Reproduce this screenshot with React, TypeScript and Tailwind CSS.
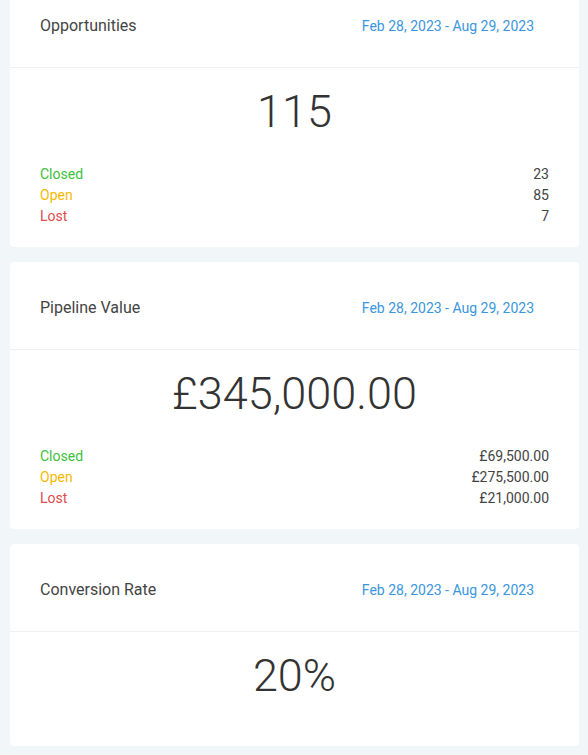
import React from 'react';

type Row = { label: string; value: string; color: string };

const range = 'Feb 28, 2023 - Aug 29, 2023';

const StatCard: React.FC<{ title: string; total: string; rows?: Row[] }> = ({ title, total, rows }) => {
  return (
    <div className="bg-white rounded-[4px]">
      <div className="h-[88px] pt-[5px] flex items-center justify-between pl-[30px] pr-[45px] border-b border-[#eef2f5]">
        <span className="text-[16px] text-[#444]">{title}</span>
        <span className="text-[14px] text-[#3a96dd]">{range}</span>
      </div>
      <div className={rows ? 'pt-[18px] pb-[20px] px-[30px]' : 'pt-[18px] pb-[44px] px-[30px]'}>
        <div className="text-center text-[45px] leading-[52px] font-light text-[#333]">{total}</div>
        {rows && (
          <div className="mt-[26px] text-[14px] leading-[21px]">
            {rows.map((r) => (
              <div key={r.label} className="flex justify-between">
                <span className={r.color}>{r.label}</span>
                <span className="text-[#444]">{r.value}</span>
              </div>
            ))}
          </div>
        )}
      </div>
    </div>
  );
};

export default function App() {
  return (
    <div className="min-h-screen bg-[#f1f6f9] pl-[10px] pr-[9px] overflow-hidden" style={{ fontFamily: 'Roboto, "Noto Sans", sans-serif' }}>
      <div className="-mt-[20px] flex flex-col gap-[15px] pb-[8px]">
        <StatCard
          title="Opportunities"
          total="115"
          rows={[
            { label: 'Closed', value: '23', color: 'text-[#3cc23c]' },
            { label: 'Open', value: '85', color: 'text-[#f7b900]' },
            { label: 'Lost', value: '7', color: 'text-[#e04b4b]' },
          ]}
        />
        <StatCard
          title="Pipeline Value"
          total="£345,000.00"
          rows={[
            { label: 'Closed', value: '£69,500.00', color: 'text-[#3cc23c]' },
            { label: 'Open', value: '£275,500.00', color: 'text-[#f7b900]' },
            { label: 'Lost', value: '£21,000.00', color: 'text-[#e04b4b]' },
          ]}
        />
        <StatCard title="Conversion Rate" total="20%" />
      </div>
    </div>
  );
}
